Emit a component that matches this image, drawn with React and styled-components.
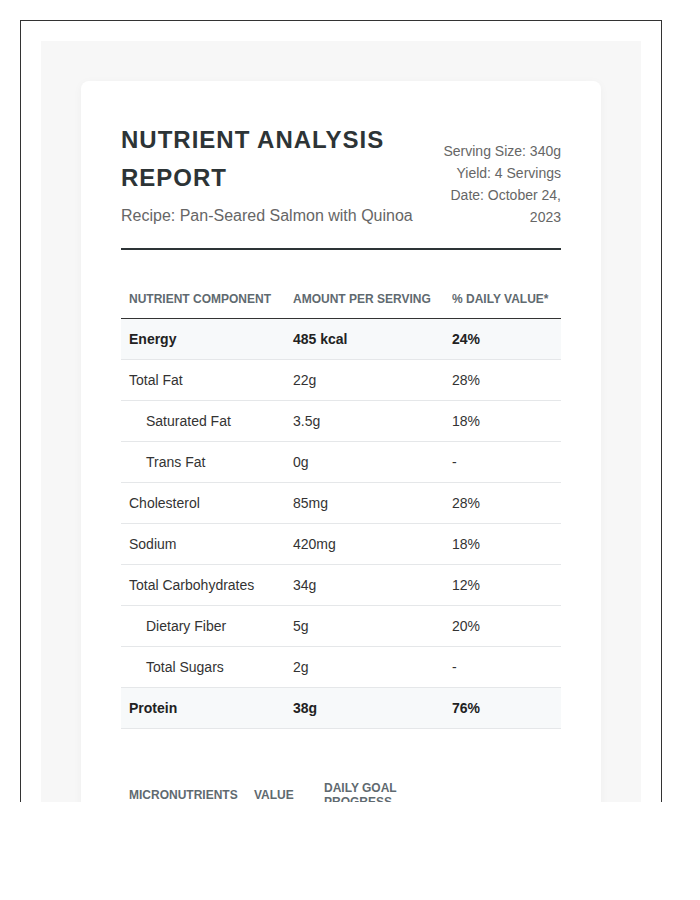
import React from "react";
import styled, { createGlobalStyle } from "styled-components";

const Global = createGlobalStyle`
  html, body { margin: 0; padding: 0; background: #fff; }
  body { font-family: "Liberation Sans", Arial, sans-serif; }
  * { box-sizing: border-box; }
`;

const Frame = styled.div`
  margin: 20px;
  width: 642px;
  height: 782px;
  border: 1px solid #333;
  border-bottom: none;
  padding: 20px 20px 0;
  overflow: hidden;
`;

const Panel = styled.div`
  background: #f7f7f7;
  padding: 40px;
  min-height: 100%;
`;

const Card = styled.div`
  background: #fff;
  border-radius: 8px;
  padding: 40px;
  box-shadow: 0 2px 10px rgba(0, 0, 0, 0.04);
`;

const Header = styled.header`
  display: flex;
  justify-content: space-between;
  align-items: flex-end;
  gap: 20px;
  padding-bottom: 20px;
  border-bottom: 2px solid #2d3436;
  margin-bottom: 30px;
`;

const TitleBlock = styled.div`
  flex: 1;
  min-width: 0;
`;

const Title = styled.h1`
  margin: 0;
  font-size: 24px;
  line-height: 38px;
  font-weight: 700;
  letter-spacing: 1px;
  text-transform: uppercase;
  color: #2d3436;
`;

const Subtitle = styled.p`
  margin: 7px 0 0;
  font-size: 16px;
  line-height: 24px;
  color: #666;
`;

const Meta = styled.div`
  width: 120px;
  text-align: right;
  font-size: 14px;
  line-height: 22px;
  color: #666;
`;

const Table = styled.table`
  border-collapse: collapse;
  width: ${(p) => (p.$full ? "100%" : "auto")};
  table-layout: fixed;
  margin-top: ${(p) => p.$gap || 0}px;
`;

const Th = styled.th`
  text-align: left;
  padding: 12px 8px;
  font-size: 12px;
  font-weight: 700;
  text-transform: uppercase;
  color: #5f6a70;
  border-bottom: 1px solid #333;
  vertical-align: middle;
  line-height: 14px;
`;

const Row = styled.tr`
  background: ${(p) => (p.$major ? "#f7f9fa" : "transparent")};
  border-bottom: 1px solid #e5e7e9;
`;

const Td = styled.td`
  padding: 12px 8px 12px ${(p) => (p.$indent ? 25 : 8)}px;
  font-size: 14px;
  line-height: 16px;
  color: ${(p) => (p.$bold ? "#222" : "#333")};
  font-weight: ${(p) => (p.$bold ? 700 : 400)};
`;

const rows = [
  { name: "Energy", amount: "485 kcal", dv: "24%", major: true },
  { name: "Total Fat", amount: "22g", dv: "28%" },
  { name: "Saturated Fat", amount: "3.5g", dv: "18%", indent: true },
  { name: "Trans Fat", amount: "0g", dv: "-", indent: true },
  { name: "Cholesterol", amount: "85mg", dv: "28%" },
  { name: "Sodium", amount: "420mg", dv: "18%" },
  { name: "Total Carbohydrates", amount: "34g", dv: "12%" },
  { name: "Dietary Fiber", amount: "5g", dv: "20%", indent: true },
  { name: "Total Sugars", amount: "2g", dv: "-", indent: true },
  { name: "Protein", amount: "38g", dv: "76%", major: true },
];

export default function App() {
  return (
    <>
      <Global />
      <Frame>
        <Panel>
          <Card>
            <Header>
              <TitleBlock>
                <Title>Nutrient Analysis Report</Title>
                <Subtitle>Recipe: Pan-Seared Salmon with Quinoa</Subtitle>
              </TitleBlock>
              <Meta>
                <div>Serving Size: 340g</div>
                <div>Yield: 4 Servings</div>
                <div>Date: October 24, 2023</div>
              </Meta>
            </Header>

            <Table $full>
              <colgroup>
                <col style={{ width: 164 }} />
                <col style={{ width: 159 }} />
                <col />
              </colgroup>
              <thead>
                <tr>
                  <Th>Nutrient Component</Th>
                  <Th>Amount Per Serving</Th>
                  <Th>% Daily Value*</Th>
                </tr>
              </thead>
              <tbody>
                {rows.map((r) => (
                  <Row key={r.name} $major={r.major}>
                    <Td $indent={r.indent} $bold={r.major}>{r.name}</Td>
                    <Td $bold={r.major}>{r.amount}</Td>
                    <Td $bold={r.major}>{r.dv}</Td>
                  </Row>
                ))}
              </tbody>
            </Table>

            <Table $gap={40}>
              <colgroup>
                <col style={{ width: 125 }} />
                <col style={{ width: 70 }} />
                <col style={{ width: 95 }} />
              </colgroup>
              <thead>
                <tr>
                  <Th>Micronutrients</Th>
                  <Th>Value</Th>
                  <Th>Daily Goal Progress</Th>
                </tr>
              </thead>
            </Table>
          </Card>
        </Panel>
      </Frame>
    </>
  );
}
